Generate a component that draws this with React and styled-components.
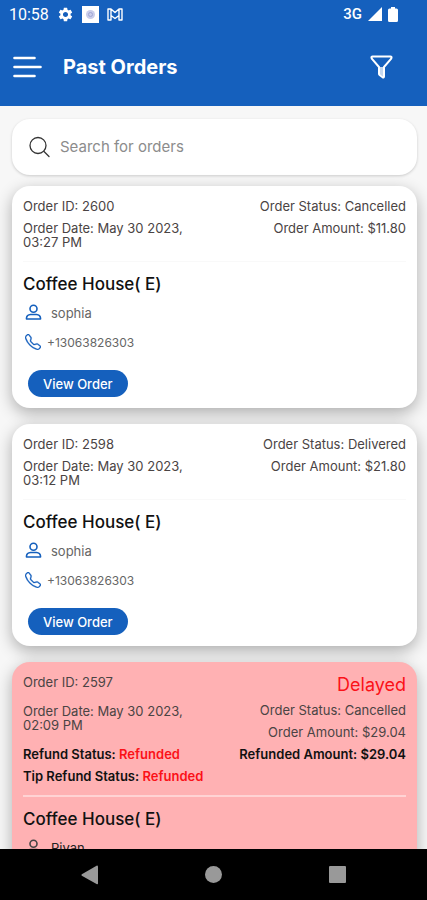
import React from "react";
import styled, { createGlobalStyle } from "styled-components";
import { MdSettings } from "react-icons/md";
import { BsTelephone } from "react-icons/bs";

const GlobalStyle = createGlobalStyle`
  * {
    box-sizing: border-box;
  }
  body {
    margin: 0;
    font-family: "Inter", "Open Sans", sans-serif;
    color: #333333;
  }
`;

const Screen = styled.div`
  height: 100vh;
  display: flex;
  flex-direction: column;
  background: #f7f7f7;
`;

const Header = styled.header`
  flex: none;
  color: #ffffff;
  background: #1560bd;
`;

const StatusBar = styled.div`
  height: 28px;
  padding: 0 29px 0 9px;
  display: flex;
  align-items: center;
  justify-content: space-between;
  font-family: Roboto, sans-serif;
  font-size: 16px;
`;

const StatusGroup = styled.div`
  display: flex;
  align-items: center;
  gap: ${(props) => props.$gap};
`;

const Network = styled.span`
  font-size: 15px;
  font-weight: 500;
`;

const TitleBar = styled.div`
  height: 78px;
  padding: 0 34px 0 13px;
  display: flex;
  align-items: center;
`;

const IconButton = styled.button`
  display: flex;
  padding: 0;
  color: inherit;
  background: none;
  border: none;
  cursor: pointer;
`;

const PageTitle = styled.h1`
  flex: 1;
  margin: 0 0 0 21px;
  font-size: 20px;
  font-weight: 700;
  line-height: 26px;
`;

const Content = styled.main`
  flex: 1;
  min-height: 0;
  padding: 13px 10px 0 12px;
  overflow-y: auto;
  scrollbar-width: none;
`;

const SearchBox = styled.label`
  height: 56px;
  margin-bottom: 11px;
  padding: 0 16px;
  display: flex;
  align-items: center;
  gap: 10px;
  background: #ffffff;
  border-radius: 18px;
  box-shadow: 0 1px 3px rgba(0, 0, 0, 0.18);
`;

const SearchInput = styled.input`
  flex: 1;
  min-width: 0;
  padding: 0 0 2px;
  font-family: inherit;
  font-size: 15px;
  color: #333333;
  background: none;
  border: none;
  outline: none;

  &::placeholder {
    color: #8c8c8c;
    opacity: 1;
  }
`;

const Orders = styled.div`
  display: flex;
  flex-direction: column;
  gap: 16px;
`;

const Card = styled.article`
  padding: 13px 11px 11px;
  background: ${(props) => (props.$delayed ? "#ffb1b3" : "#ffffff")};
  border-radius: 18px;
  box-shadow: 0 5px 16px rgba(0, 0, 0, 0.3);
`;

const Summary = styled.div`
  padding-bottom: 12px;
  display: flex;
  justify-content: space-between;
  border-bottom: ${(props) =>
    props.$delayed ? "2px solid #ffd3d4" : "1px solid #f9f9f9"};
`;

const Column = styled.div`
  flex: 1;
  display: flex;
  flex-direction: column;
  gap: 8px;
  text-align: ${(props) => props.$align || "left"};
`;

const Line = styled.div`
  font-size: 13px;
  line-height: 14px;
  font-weight: ${(props) => (props.$strong ? 600 : 400)};
  color: ${(props) => (props.$strong ? "#111111" : "#4a4444")};
  white-space: ${(props) => (props.$wrap ? "normal" : "nowrap")};
`;

const DateLine = styled(Line)`
  margin: ${(props) => (props.$delayed ? "7px 0" : "0")};
`;

const Delayed = styled.div`
  font-size: 18px;
  line-height: 20px;
  color: #fb1118;
`;

const Refunded = styled.span`
  color: #fb1118;
`;

const Shop = styled.h2`
  margin: 11px 0 8px;
  font-size: 17px;
  font-weight: 500;
  line-height: 22px;
  color: #111111;
`;

const Contact = styled.div`
  height: 20px;
  margin-bottom: 9px;
  padding-left: 2px;
  display: flex;
  align-items: center;
  gap: ${(props) => props.$gap};
  font-size: ${(props) => props.$size || "13px"};
  color: ${(props) => (props.$dark ? "#222222" : "#666666")};

  svg {
    flex: none;
    color: ${(props) => (props.$dark ? "#444444" : "#1560bd")};
  }
`;

const PhoneLink = styled.a`
  color: inherit;
  text-decoration: none;
`;

const ViewButton = styled.button`
  height: 27px;
  margin: 18px 0 0 5px;
  padding: 0 15px;
  display: block;
  font-family: inherit;
  font-size: 13px;
  font-weight: 500;
  color: #ffffff;
  background: #1560bd;
  border: none;
  border-radius: 14px;
  cursor: pointer;
`;

const NavBar = styled.nav`
  flex: none;
  height: 51px;
  padding: 0 81px;
  display: flex;
  align-items: center;
  justify-content: space-between;
  color: #999999;
  background: #000000;
`;

const AppBadgeIcon = () => (
  <svg width="17" height="17" viewBox="0 0 17 17">
    <path fill="#fff" d="M0 0h17v17H0z" />
    <circle cx="8.5" cy="8.5" r="4.5" fill="#c9cdea" />
    <circle cx="8.5" cy="8.5" r="2" fill="none" stroke="#9fa6d5" />
  </svg>
);

const MailIcon = () => (
  <svg width="16" height="13" viewBox="0 0 16 13" fill="none" stroke="#fff">
    <path
      strokeWidth="1.4"
      strokeLinejoin="round"
      d="M1 1h3l4 3.500L12 1h3v11h-3V7.500L8 10.500 4 7.500V12H1ZM4 1v6.500M12 1v6.500"
    />
  </svg>
);

const SignalIcon = () => (
  <svg width="14" height="14" viewBox="0 0 14 14" fill="#fff">
    <path d="M14 0v14H0z" />
  </svg>
);

const BatteryIcon = () => (
  <svg width="10" height="15" viewBox="0 0 10 15" fill="#fff">
    <path d="M3 0h4v1.500h1.500Q10 1.500 10 3v10.500q0 1.500-1.500 1.500h-7Q0 15 0 13.500V3q0-1.500 1.500-1.500H3z" />
  </svg>
);

const MenuIcon = () => (
  <svg width="29" height="22" viewBox="0 0 29 22" stroke="#fff">
    <path
      fill="none"
      strokeWidth="2.600"
      strokeLinecap="round"
      d="M1.500 2h20M1.500 11h26M1.500 20h20"
    />
  </svg>
);

const FilterIcon = () => (
  <svg width="23" height="24" viewBox="0 0 23 24" fill="none" stroke="#fff">
    <path
      strokeWidth="2"
      strokeLinejoin="round"
      d="M2.500 1.500h18q1.300 0 1 1.200-.2.800-.7 1.500L14 12v9.500q0 1.500-1.400.8L9.600 20q-.6-.4-.6-1.200V12L2.200 4.200q-.5-.7-.7-1.500-.3-1.200 1-1.200Z"
    />
    <path fill="#fff" fillOpacity=".75" stroke="none" d="M9 12h5v10l-5-3z" />
  </svg>
);

const SearchIcon = () => (
  <svg width="22" height="22" viewBox="0 0 22 22" fill="none" stroke="#333">
    <circle cx="10" cy="9.500" r="8" strokeWidth="1.300" />
    <path strokeWidth="1.300" strokeLinecap="round" d="m16 15.500 5 5" />
  </svg>
);

const PersonIcon = () => (
  <svg
    width="17"
    height="19"
    viewBox="0 0 17 19"
    fill="none"
    stroke="currentColor"
  >
    <circle cx="8.500" cy="4.700" r="3.500" strokeWidth="1.600" />
    <path
      strokeWidth="1.600"
      strokeLinejoin="round"
      d="M1.500 15v-1q.3-3.200 4-3.500h6q3.700.3 4 3.500v1Z"
    />
  </svg>
);

const orders = [
  {
    id: "2600",
    date: "May 30 2023, 03:27 PM",
    status: "Cancelled",
    amount: "$11.80",
    customer: "sophia",
    phone: "+13063826303",
  },
  {
    id: "2598",
    date: "May 30 2023, 03:12 PM",
    status: "Delivered",
    amount: "$21.80",
    customer: "sophia",
    phone: "+13063826303",
  },
  {
    id: "2597",
    date: "May 30 2023, 02:09 PM",
    status: "Cancelled",
    amount: "$29.04",
    customer: "Rivan",
    phone: "+13063826303",
    delayed: true,
  },
];

const OrderCard = ({ order }) => (
  <Card $delayed={order.delayed}>
    <Summary $delayed={order.delayed}>
      <Column>
        <Line>Order ID: {order.id}</Line>
        <DateLine $wrap $delayed={order.delayed}>
          Order Date: {order.date}
        </DateLine>
        {order.delayed && (
          <>
            <Line $strong>
              Refund Status: <Refunded>Refunded</Refunded>
            </Line>
            <Line $strong>
              Tip Refund Status: <Refunded>Refunded</Refunded>
            </Line>
          </>
        )}
      </Column>
      <Column $align="right">
        {order.delayed && <Delayed>Delayed</Delayed>}
        <Line>Order Status: {order.status}</Line>
        <Line>Order Amount: {order.amount}</Line>
        {order.delayed && <Line $strong>Refunded Amount: {order.amount}</Line>}
      </Column>
    </Summary>
    <Shop>Coffee House( E)</Shop>
    <Contact $gap="9px" $dark={order.delayed}>
      <PersonIcon />
      {order.customer}
    </Contact>
    <Contact $gap="6px" $size="12px" $dark={order.delayed}>
      <BsTelephone size={16} strokeWidth={0.3} />
      <PhoneLink href={`tel:${order.phone}`}>{order.phone}</PhoneLink>
    </Contact>
    <ViewButton>View Order</ViewButton>
  </Card>
);

const App = () => {
  return (
    <Screen>
      <GlobalStyle />
      <Header>
        <StatusBar>
          <StatusGroup $gap="8px">
            <span>10:58</span>
            <MdSettings size={17} />
            <AppBadgeIcon />
            <MailIcon />
          </StatusGroup>
          <StatusGroup $gap="6px">
            <Network>3G</Network>
            <SignalIcon />
            <BatteryIcon />
          </StatusGroup>
        </StatusBar>
        <TitleBar>
          <IconButton aria-label="Menu">
            <MenuIcon />
          </IconButton>
          <PageTitle>Past Orders</PageTitle>
          <IconButton aria-label="Filter">
            <FilterIcon />
          </IconButton>
        </TitleBar>
      </Header>
      <Content>
        <SearchBox>
          <SearchIcon />
          <SearchInput
            type="text"
            aria-label="Search for orders"
            placeholder="Search for orders"
          />
        </SearchBox>
        <Orders>
          {orders.map((order) => (
            <OrderCard key={order.id} order={order} />
          ))}
        </Orders>
      </Content>
      <NavBar>
        <IconButton aria-label="Back">
          <svg width="17" height="20" viewBox="0 0 17 20" fill="currentColor">
            <path d="M16 .5q1 0 1 1v17q0 1-1 .8L.8 10.700Q0 10 .8 9.300L16 .5Z" />
          </svg>
        </IconButton>
        <IconButton aria-label="Home">
          <svg width="17" height="17" viewBox="0 0 17 17" fill="currentColor">
            <circle cx="8.500" cy="8.500" r="8.500" />
          </svg>
        </IconButton>
        <IconButton aria-label="Recent apps">
          <svg width="17" height="17" viewBox="0 0 17 17" fill="currentColor">
            <rect width="17" height="17" rx="1" />
          </svg>
        </IconButton>
      </NavBar>
    </Screen>
  );
};

export default App;
